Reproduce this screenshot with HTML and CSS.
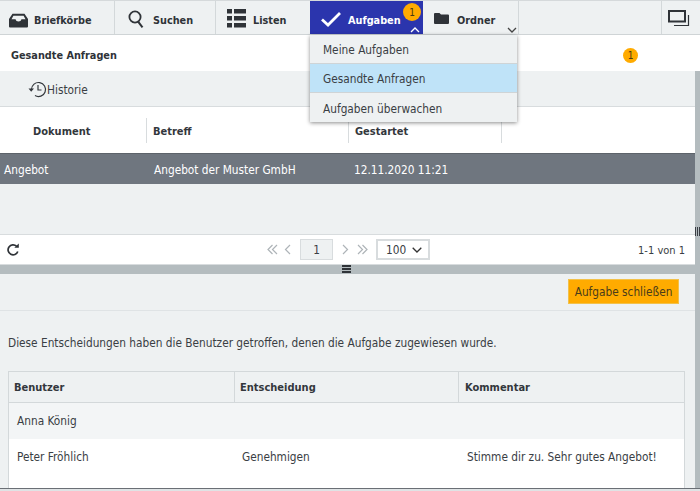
FILE: index.html
```html
<!DOCTYPE html>
<html lang="de">
<head>
<meta charset="utf-8">
<title>Gesandte Anfragen</title>
<link rel="stylesheet" href="styles.css">
</head>
<body>
<div class="app">
  <nav class="toolbar">
    <div class="tool tool-briefkoerbe">
      <svg class="ico" width="21" height="15" viewBox="0 0 21 15"><path d="M1 6 L4.5 .8 H16.5 L20 6 V13.5 Q20 14.5 19 14.5 H2 Q1 14.5 1 13.5 Z M3.5 6.2 H7.5 Q8 8.5 10.5 8.5 Q13 8.5 13.5 6.2 H17.5 L15.6 2.8 H5.4 Z" fill="#2f3338" fill-rule="evenodd"/></svg>
      <span>Briefkörbe</span>
    </div>
    <div class="tool tool-suchen">
      <svg class="ico" width="16" height="18" viewBox="0 0 16 18"><circle cx="7" cy="7" r="5.6" fill="none" stroke="#2f3338" stroke-width="1.8"/><path d="M10.3 11.8 L14.5 17.4" stroke="#2f3338" stroke-width="2" fill="none"/></svg>
      <span>Suchen</span>
    </div>
    <div class="tool tool-listen">
      <svg class="ico" width="19" height="19" viewBox="0 0 19 19" fill="#2f3338"><rect x="0" y="0" width="5" height="4.5"/><rect x="7" y="0" width="12" height="4.5"/><rect x="0" y="7" width="5" height="4.5"/><rect x="7" y="7" width="12" height="4.5"/><rect x="0" y="14" width="5" height="4.5"/><rect x="7" y="14" width="12" height="4.5"/></svg>
      <span>Listen</span>
    </div>
    <div class="tool tool-aufgaben">
      <svg class="ico" width="20" height="15" viewBox="0 0 20 15"><path d="M1 7.5 L7 13 L19 1" fill="none" stroke="#fff" stroke-width="2.8"/></svg>
      <span>Aufgaben</span>
      <b class="badge badge-top">1</b>
      <svg class="caret" width="10" height="6" viewBox="0 0 10 6"><path d="M1 5 L5 1 L9 5" fill="none" stroke="#fff" stroke-width="1.3"/></svg>
    </div>
    <div class="tool tool-ordner">
      <svg class="ico" width="15" height="11" viewBox="0 0 15 11"><path d="M0 1 Q0 0 1 0 H5.5 L7 1.5 H14 Q15 1.5 15 2.5 V10 Q15 11 14 11 H1 Q0 11 0 10 Z" fill="#2f3338"/></svg>
      <span>Ordner</span>
      <svg class="caret" width="10" height="6" viewBox="0 0 10 6"><path d="M1 1 L5 5 L9 1" fill="none" stroke="#444" stroke-width="1.3"/></svg>
    </div>
    <div class="tool-fill"></div>
    <div class="tool tool-window">
      <svg class="ico" width="22" height="17" viewBox="0 0 22 17"><rect x="1" y="1" width="16" height="10.5" fill="none" stroke="#2f3338" stroke-width="2"/><path d="M20.5 5 V15.5 H6" fill="none" stroke="#2f3338" stroke-width="1.2"/></svg>
    </div>
  </nav>

  <ul class="menu">
    <li class="menu-item">Meine Aufgaben</li>
    <li class="menu-item is-active">Gesandte Anfragen</li>
    <li class="menu-item">Aufgaben überwachen</li>
  </ul>

  <div class="upper">
    <header class="title-row">
      <strong>Gesandte Anfragen</strong>
      <b class="badge badge-title">1</b>
    </header>
    <div class="history-row">
      <svg width="20" height="19" viewBox="0 0 20 19"><path d="M4.5 9.5 A7 7 0 1 1 8 15.6" fill="none" stroke="#33373c" stroke-width="1.2"/><path d="M1.5 8.5 H7 L4.2 11.8 Z" fill="#33373c"/><path d="M11 5 V10 H14.5" fill="none" stroke="#33373c" stroke-width="1.2"/></svg>
      <span>Historie</span>
    </div>
    <div class="grid-head">
      <div class="col col-dok">Dokument</div>
      <div class="col col-bet">Betreff</div>
      <div class="col col-ges">Gestartet</div>
    </div>
    <div class="grid-row">
      <div class="cell cell-dok">Angebot</div>
      <div class="cell cell-bet">Angebot der Muster GmbH</div>
      <div class="cell cell-ges">12.11.2020 11:21</div>
    </div>
    <div class="grid-empty"></div>
    <div class="pager">
      <svg class="reload" width="14" height="14" viewBox="0 0 14 14"><path d="M11.8 8.5 A5 5 0 1 1 10.5 3.2" fill="none" stroke="#2f3338" stroke-width="1.7"/><path d="M8.3 4.8 H12.8 V0.5 Z" fill="#2f3338"/></svg>
      <div class="pager-mid">
        <svg class="pg-dbl" width="11" height="11" viewBox="0 0 11 11"><path d="M5.5 1 L1 5.5 L5.5 10 M10 1 L5.5 5.5 L10 10" fill="none" stroke="#aeb4b8" stroke-width="1.2"/></svg>
        <svg class="pg-sgl" width="7" height="11" viewBox="0 0 7 11"><path d="M6 1 L1.5 5.5 L6 10" fill="none" stroke="#aeb4b8" stroke-width="1.2"/></svg>
        <span class="page-box">1</span>
        <svg class="pg-sgl" width="7" height="11" viewBox="0 0 7 11"><path d="M1 1 L5.5 5.5 L1 10" fill="none" stroke="#aeb4b8" stroke-width="1.2"/></svg>
        <svg class="pg-dbl" width="11" height="11" viewBox="0 0 11 11"><path d="M1 1 L5.5 5.5 L1 10 M5.5 1 L10 5.5 L5.5 10" fill="none" stroke="#aeb4b8" stroke-width="1.2"/></svg>
        <span class="size-box">100
          <svg width="10" height="6" viewBox="0 0 10 6"><path d="M.7 .7 L5 5 L9.3 .7" fill="none" stroke="#333" stroke-width="1.3"/></svg>
        </span>
      </div>
      <span class="pager-count">1-1 von 1</span>
    </div>
  </div>

  <div class="splitter"><span class="grip"></span></div>
  <span class="side-grip"></span>

  <section class="lower">
    <div class="action-row"><button class="btn-close">Aufgabe schließen</button></div>
    <p class="note">Diese Entscheidungen haben die Benutzer getroffen, denen die Aufgabe zugewiesen wurde.</p>
    <div class="table">
      <div class="t-head">
        <div class="th th-a">Benutzer</div>
        <div class="th th-b">Entscheidung</div>
        <div class="th th-c">Kommentar</div>
      </div>
      <div class="t-row t-row-grey">
        <div class="td td-a">Anna König</div>
      </div>
      <div class="t-row t-row-white">
        <div class="td td-a">Peter Fröhlich</div>
        <div class="td td-b">Genehmigen</div>
        <div class="td td-c">Stimme dir zu. Sehr gutes Angebot!</div>
      </div>
    </div>
  </section>
</div>
</body>
</html>
```
FILE: styles.css
```css
* { box-sizing: border-box; }
html, body { margin: 0; padding: 0; }
body {
  width: 700px;
  height: 491px;
  overflow: hidden;
  background: #dfe3e5;
  font-family: "DejaVu Sans Condensed", "DejaVu Sans", sans-serif;
  font-size: 11.75px;
  color: #3a3e44;
}
.app { position: relative; width: 700px; height: 489px; display: flex; flex-direction: column; background: #b4bcbf; border-bottom: 1px solid #6a6f75; }

.toolbar { height: 35px; flex: none; display: flex; background: #eef1f2; border-top: 1px solid #d5d9db; border-bottom: 1px solid #cfd4d6; font-weight: 700; font-size: 10.8px; color: #2f3338; }
.tool { position: relative; display: flex; align-items: center; border-right: 1px solid #d3d8da; }
.tool span { margin-top: 6px; }
.ico { flex: none; margin-top: 2px; }
.tool-briefkoerbe { width: 115px; padding-left: 8px; gap: 5px; }
.tool-briefkoerbe .ico { margin-top: 5px; }
.tool-suchen { width: 101px; padding-left: 13px; gap: 9px; }
.tool-listen { width: 94px; padding-left: 11px; gap: 7px; border-right: 0; }
.tool-aufgaben { width: 113px; padding-left: 11px; gap: 7px; background: #2b35ad; color: #fff; border-right: 0; }
.tool-aufgaben .ico { margin-top: 3px; }
.tool-ordner { width: 96px; padding-left: 11px; gap: 8px; }
.tool-fill { flex: 1; border-right: 1px solid #d3d8da; }
.tool-window { width: 38px; padding-left: 6px; border-right: 0; }
.caret { position: absolute; right: 3px; bottom: 1px; }
.tool-ordner .caret { right: 1px; }

.badge { display: flex; align-items: center; justify-content: center; width: 18px; height: 18px; border-radius: 50%; background: #ffab00; color: #4a3a10; font-size: 10px; font-weight: 400; }
.badge-top { position: absolute; left: 93px; top: 2px; }
.badge-title { width: 15px; height: 15px; margin-left: auto; margin-right: 62px; }

.menu { position: absolute; left: 310px; top: 35px; width: 207px; margin: 0; padding: 0; list-style: none; background: #eef1f2; box-shadow: 0 1px 4px rgba(0,0,0,.45); z-index: 5; }
.menu-item { height: 29px; padding: 2px 0 0 13px; display: flex; align-items: center; border-bottom: 1px solid #cfd4d6; }
.menu-item:last-child { border-bottom: 0; }
.is-active { background: #bfe3f8; }

.upper { flex: none; display: flex; flex-direction: column; }
.title-row { height: 36px; background: #fff; display: flex; align-items: center; padding: 4px 0 0 11px; color: #2f3338; font-size: 10.8px; }
.history-row { height: 36px; display: flex; align-items: center; padding: 2px 0 0 27px; margin-right: 5px; background: #eef1f2; border-bottom: 1px solid #d8dcde; }
.grid-head { height: 46px; margin-right: 5px; background: #fff; display: flex; align-items: center; font-weight: 700; font-size: 11px; color: #33373c; }
.col { height: 25px; display: flex; align-items: center; padding-top: 3px; }
.col-dok { width: 147px; padding-left: 33px; border-right: 1px solid #d8dcde; }
.col-bet { width: 202px; padding-left: 6px; border-right: 1px solid #d8dcde; }
.col-ges { width: 153px; padding-left: 6px; border-right: 1px solid #d8dcde; }
.grid-row { height: 31px; display: flex; align-items: center; padding-top: 2px; background: #6f767f; color: #fff; border-top: 1px solid #5d636a; margin-right: 5px; }
.cell-dok { width: 154px; padding-left: 4px; }
.cell-bet { width: 200px; }
.grid-empty { height: 51px; margin-right: 5px; background: #eef1f2; border-bottom: 1px solid #d8dcde; }
.pager { height: 30px; background: #fff; margin-right: 5px; display: flex; align-items: center; padding: 0 0 0 6px; border-bottom: 1px solid #d8dcde; position: relative; }
.pager-mid { position: absolute; left: 267px; top: 4px; display: flex; align-items: center; height: 21px; }
.pg-sgl { margin: 0 8px 0 6px; }
.pager-mid .pg-sgl:nth-of-type(3) { margin: 0 8px 0 9px; }
.pager-mid .pg-sgl:nth-of-type(2) { margin: 0 9px 0 6px; }
.page-box { width: 33px; height: 21px; background: #eef1f2; border: 1px solid #d8dcde; display: flex; align-items: center; justify-content: center; padding-top: 1px; }
.size-box { width: 54px; height: 21px; margin-left: 8px; border: 2px solid #d8dcde; display: flex; align-items: center; justify-content: space-between; padding: 1px 6px 0 8px; }
.pager-count { margin-left: auto; margin-right: 10px; font-size: 11px; padding-top: 1px; }

.splitter { height: 10px; flex: none; background: #b4bcbf; display: flex; justify-content: center; margin-top: -1px; }
.grip { width: 9px; height: 8px; margin-top: 1px; margin-left: -7px; border-top: 2px solid #2f3338; border-bottom: 2px solid #2f3338; background: linear-gradient(#2f3338,#2f3338) center/100% 2px no-repeat; }
.side-grip { position: absolute; right: 0; top: 227px; width: 5px; height: 9px; background: repeating-linear-gradient(90deg, #3a3e44 0 1px, #b4bcbf 1px 2px); }

.lower { flex: 1; display: flex; flex-direction: column; margin-right: 5px; min-height: 0; background: #eef1f2; }
.action-row { flex: none; height: 37px; padding: 5px 16px 0 0; display: flex; justify-content: flex-end; align-items: flex-start; border-bottom: 1px solid #dfe3e5; }
.btn-close { width: 111px; height: 25px; padding: 0; border: 1px solid #f2c14a; background: #ffab00; color: #4a3c1a; font: 400 11.75px "DejaVu Sans Condensed", "DejaVu Sans", sans-serif; }
.note { flex: none; margin: 25px 0 0 8px; line-height: 14px; height: 14px; white-space: nowrap; }
.table { margin: 21px 10px 0 8px; flex: 1; min-height: 0; overflow: hidden; border: 1px solid #d3d8da; border-bottom: 0; }
.t-head { height: 31px; display: flex; align-items: center; border-bottom: 1px solid #d3d8da; font-weight: 700; font-size: 11px; color: #33373c; }
.th { height: 100%; display: flex; align-items: center; padding-left: 5px; }
.th-a { width: 226px; border-right: 1px solid #d3d8da; }
.th-b { width: 224px; border-right: 1px solid #d3d8da; }
.th-c { padding-left: 6px; }
.t-row { display: flex; align-items: center; }
.t-row-grey { height: 36px; background: #f3f5f6; }
.t-row-white { height: 50px; background: #fff; align-items: flex-start; padding-top: 11px; }
.td-a { width: 225px; padding-left: 8px; }
.td-b { width: 225px; padding-left: 8px; }
.td-c { padding-left: 8px; }
```
